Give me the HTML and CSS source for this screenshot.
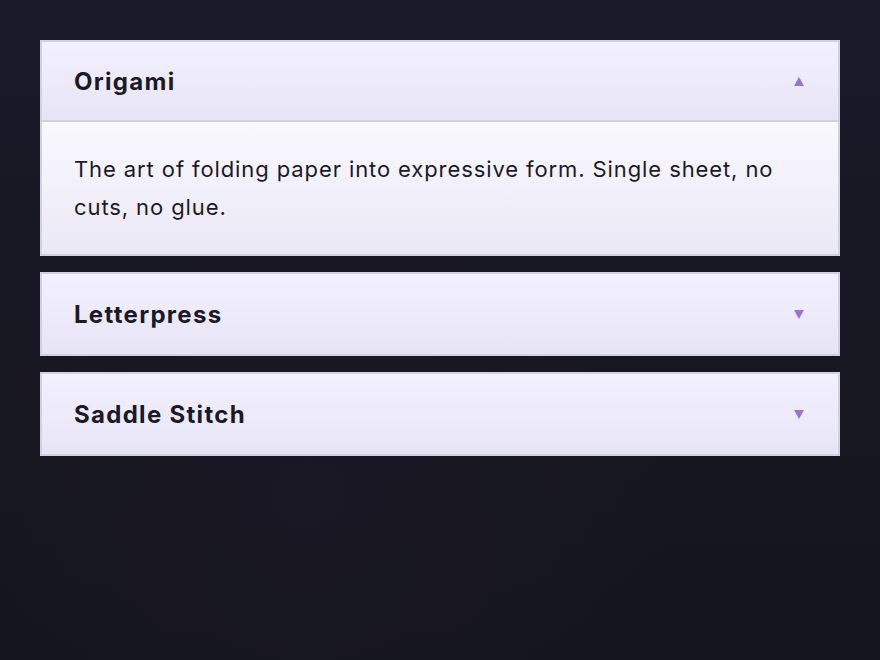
FILE: index.html
```html
<!DOCTYPE html>
<html lang="en">
<head>
    <meta charset="UTF-8">
    <title>Accordion</title>
    <meta name="viewport" content="width=device-width, initial-scale=1.0">
    <link rel="stylesheet" href="styles.css">
</head>
<body>
    <div class="accordion">
        <div class="item open">
            <div class="item-head">
                <span class="item-title">Origami</span>
                <svg class="caret" width="10" height="9" viewBox="0 0 10 9"><path d="M5 0 L10 9 L0 9 Z"/></svg>
            </div>
            <div class="item-body">
                The art of folding paper into expressive form. Single sheet, no cuts, no glue.
            </div>
        </div>
        <div class="item">
            <div class="item-head">
                <span class="item-title">Letterpress</span>
                <svg class="caret" width="10" height="9" viewBox="0 0 10 9"><path d="M0 0 L10 0 L5 9 Z"/></svg>
            </div>
        </div>
        <div class="item">
            <div class="item-head">
                <span class="item-title">Saddle Stitch</span>
                <svg class="caret" width="10" height="9" viewBox="0 0 10 9"><path d="M0 0 L10 0 L5 9 Z"/></svg>
            </div>
        </div>
    </div>
</body>
</html>
```

FILE: styles.css
```css
html, body {
    height: 100%;
}
body {
    margin: 0;
    font-family: Inter, "Liberation Sans", sans-serif;
    color: #1b1a26;
    background: radial-gradient(ellipse at 35% 75%, #191824 0%, rgba(25, 24, 36, 0) 45%),
                linear-gradient(180deg, #1a1928 0%, #15151d 100%);
}
.accordion {
    padding: 40px;
    display: flex;
    flex-direction: column;
    gap: 16px;
}
.item {
    border: 2px solid #d3d0e2;
}
.item-head {
    box-sizing: border-box;
    display: flex;
    justify-content: space-between;
    align-items: center;
    height: 80px;
    padding: 0 34px 0 32px;
    background: linear-gradient(180deg, #f3f1fe 0%, #e7e4f6 100%);
}
.item.open .item-head {
    border-bottom: 2px solid #d3d0e2;
}
.item-title {
    font-size: 24px;
    font-weight: 700;
    letter-spacing: 1.3px;
}
.caret {
    fill: #9673d9;
}
.item-body {
    padding: 28px 32px 28px;
    font-size: 22px;
    line-height: 38px;
    letter-spacing: 0.9px;
    background: linear-gradient(180deg, #f9f8fe 0%, #ebe8f6 100%);
}
```
